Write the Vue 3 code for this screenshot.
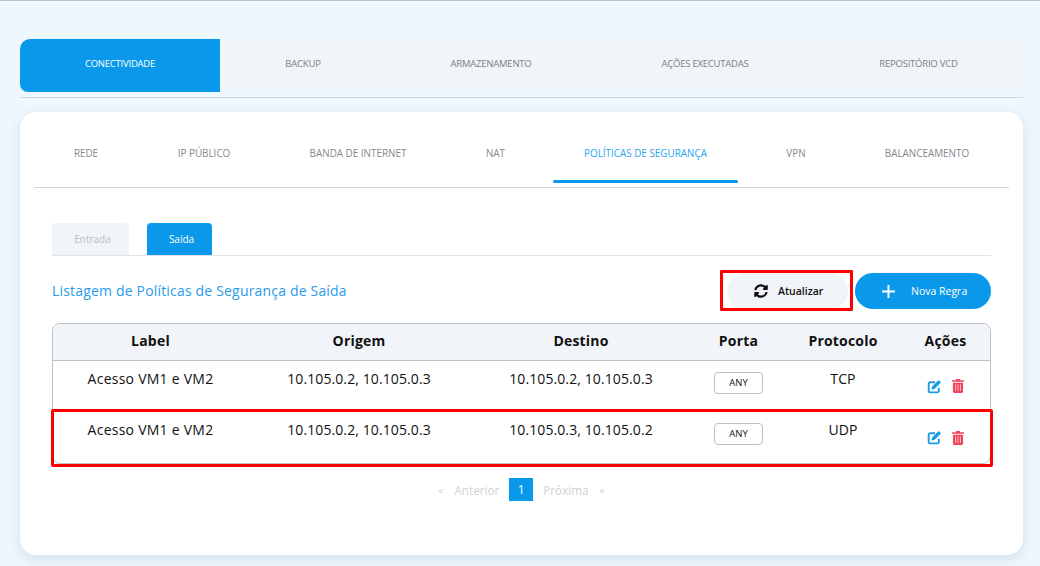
<script setup>
const mainTabs = [
  { label: 'CONECTIVIDADE', w: 200, active: true },
  { label: 'BACKUP', w: 166 },
  { label: 'ARMAZENAMENTO', w: 210 },
  { label: 'AÇÕES EXECUTADAS', w: 218 },
  { label: 'REPOSITÓRIO VCD', w: 209 }
]
const subTabs = [
  { label: 'REDE', w: 104 },
  { label: 'IP PÚBLICO', w: 132 },
  { label: 'BANDA DE INTERNET', w: 176 },
  { label: 'NAT', w: 99 },
  { label: 'POLÍTICAS DE SEGURANÇA', w: 201, active: true },
  { label: 'VPN', w: 100 },
  { label: 'BALANCEAMENTO', w: 162 }
]
const rows = [
  { label: 'Acesso VM1 e VM2', origem: '10.105.0.2, 10.105.0.3', destino: '10.105.0.2, 10.105.0.3', proto: 'TCP' },
  { label: 'Acesso VM1 e VM2', origem: '10.105.0.2, 10.105.0.3', destino: '10.105.0.3, 10.105.0.2', proto: 'UDP' }
]
</script>

<template>
  <div class="page">
    <nav class="main-tabs">
      <a v-for="t in mainTabs" :key="t.label" class="main-tab" :class="{ active: t.active }" :style="{ width: t.w + 'px' }">{{ t.label }}</a>
    </nav>
    <section class="card">
      <nav class="sub-tabs">
        <a v-for="t in subTabs" :key="t.label" class="sub-tab" :class="{ active: t.active }" :style="{ width: t.w + 'px' }">{{ t.label }}</a>
      </nav>
      <div class="content">
        <div class="pills">
          <a class="pill">Entrada</a>
          <a class="pill on">Saída</a>
        </div>
        <div class="head-row">
          <h2 class="title">Listagem de Políticas de Segurança de Saída</h2>
          <button class="btn refresh">
            <svg width="14" height="14" viewBox="0 0 512 512" fill="#111"><path d="M370.72 133.28C339.458 104.008 298.888 87.962 255.848 88c-77.458.068-144.328 53.178-162.791 126.85-1.344 5.363-6.122 9.15-11.651 9.15H24.103c-7.498 0-13.194-6.807-11.807-14.176C33.933 94.924 134.813 8 256 8c66.448 0 126.791 26.136 171.315 68.685L463.03 40.97C478.149 25.851 504 36.559 504 57.941V192c0 13.255-10.745 24-24 24H345.941c-21.382 0-32.09-25.851-16.971-40.971l41.75-41.749zM32 296h134.059c21.382 0 32.09 25.851 16.971 40.971l-41.75 41.75c31.262 29.273 71.835 45.319 114.876 45.28 77.418-.07 144.315-53.144 162.787-126.849 1.344-5.363 6.122-9.15 11.651-9.15h57.304c7.498 0 13.194 6.807 11.807 14.176C478.067 417.076 377.187 504 256 504c-66.448 0-126.791-26.136-171.315-68.685L48.97 471.03C33.851 486.149 8 475.441 8 454.059V320c0-13.255 10.745-24 24-24z"/></svg>
            <span>Atualizar</span>
          </button>
          <button class="btn add">
            <svg width="13" height="13" viewBox="0 0 13 13" fill="none" stroke="#fff" stroke-width="2"><path d="M6.5 0v13M0 6.5h13"/></svg>
            <span>Nova Regra</span>
          </button>
        </div>
        <div class="table-box">
          <table>
            <colgroup>
              <col class="c1"><col class="c2"><col class="c3"><col class="c4"><col class="c5"><col>
            </colgroup>
            <thead>
              <tr><th>Label</th><th>Origem</th><th>Destino</th><th>Porta</th><th>Protocolo</th><th>Ações</th></tr>
            </thead>
            <tbody>
              <tr v-for="(r, i) in rows" :key="i">
                <td>{{ r.label }}</td>
                <td>{{ r.origem }}</td>
                <td>{{ r.destino }}</td>
                <td><span class="any">ANY</span></td>
                <td>{{ r.proto }}</td>
                <td>
                  <span class="actions">
                    <svg width="15" height="15" viewBox="0 0 16 16"><path d="M12.6 9.2v3.600a1.400 1.400 0 0 1-1.400 1.400H3.200a1.400 1.400 0 0 1-1.400-1.400V4.900a1.400 1.400 0 0 1 1.400-1.400h5.400" fill="none" stroke="#1b9be8" stroke-width="2"/><path d="M12.400 1.100l2.500 2.500-7 7-3 .5.5-3z" fill="#1b9be8"/></svg>
                    <svg width="12" height="14" viewBox="0 0 13 15"><path d="M4.500 0h4l.6 1.200H13v1.700H0V1.200h3.900z" fill="#f2435b"/><path d="M1 4h11v9.500a1.500 1.500 0 0 1-1.500 1.500h-8A1.500 1.500 0 0 1 1 13.500z" fill="#f2435b"/><path d="M3.800 5.500v7.500M6.500 5.500v7.500M9.200 5.500v7.500" stroke="#f8b6bf" stroke-width="1.100"/></svg>
                  </span>
                </td>
              </tr>
            </tbody>
          </table>
          <div class="mark-row"></div>
        </div>
        <div class="pager">
          <span class="pg">«</span>
          <span class="pg word">Anterior</span>
          <span class="cur">1</span>
          <span class="pg word">Próxima</span>
          <span class="pg">»</span>
        </div>
      </div>
    </section>
  </div>
</template>

<style>
html, body { margin: 0; background: #eef7fe; }
</style>

<style scoped>
.page {
  box-sizing: border-box;
  height: 566px;
  overflow: hidden;
  padding: 38px 17px 0 20px;
  border-top: 1px solid #b9c0cc;
  background: #eef7fe;
  font-family: "Open Sans", sans-serif;
  color: #111;
}
.main-tabs {
  display: flex;
  height: 53px;
  background: #f0f5f9;
  border-radius: 10px 10px 0 0;
  box-shadow: 0 5px 0 #eef7fe, 0 6px 0 #cfd6e0;
}
.main-tab {
  display: flex;
  align-items: center;
  justify-content: center;
  box-sizing: border-box;
  padding-bottom: 4px;
  font-size: 9.5px;
  color: #7c7f84;
  letter-spacing: -0.22px;
}
.main-tab.active {
  background: #0a99ea;
  color: #fff;
  border-radius: 10px 0 0 8px;
}
.card {
  margin-top: 20px;
  height: 443px;
  background: #fff;
  border-radius: 16px;
  box-shadow: 0 4px 12px rgba(120, 140, 170, 0.22);
  padding: 0 14px;
}
.sub-tabs {
  display: flex;
  height: 75px;
  border-bottom: 1px solid #d3d5da;
}
.sub-tab {
  position: relative;
  display: flex;
  align-items: center;
  justify-content: center;
  box-sizing: border-box;
  padding-top: 7px;
  font-size: 9.9px;
  color: #85878b;
  white-space: nowrap;
}
.sub-tab.active { color: #2aa5ee; }
.sub-tab.active::after {
  content: "";
  position: absolute;
  left: 8px;
  right: 8px;
  bottom: 4px;
  height: 3px;
  border-radius: 2px;
  background: #0a99ea;
}
.content { padding: 35px 18px 0; }
.pills {
  display: flex;
  gap: 18px;
  height: 32px;
  border-bottom: 1px solid #e1e3e6;
}
.pill {
  width: 77px;
  box-sizing: border-box;
  padding-left: 4px;
  display: flex;
  align-items: center;
  justify-content: center;
  background: #f1f4f8;
  border-radius: 4px 4px 0 0;
  font-size: 10px;
  color: #bcc0c6;
}
.pill.on {
  width: 65px;
  background: #0a99ea;
  color: #fff;
}
.head-row {
  display: flex;
  align-items: center;
  height: 36px;
  margin-top: 17px;
}
.title {
  margin: 0 auto 2px 0;
  font-size: 14px;
  font-weight: 400;
  color: #2a9bea;
  letter-spacing: 0.18px;
}
.btn {
  height: 36px;
  display: flex;
  align-items: center;
  border: 0;
  border-radius: 18px;
  font-family: inherit;
  font-size: 10.5px;
  padding: 0;
}
.refresh {
  position: relative;
  width: 121px;
  margin-right: 7px;
  padding-left: 27px;
  gap: 10px;
  background: #f1f4f8;
  color: #111;
  font-weight: 600;
}
.refresh::after {
  content: "";
  position: absolute;
  left: -7px;
  right: -5px;
  top: -3px;
  bottom: -2px;
  border: 3px solid #f00;
  border-radius: 1px;
}
.add {
  width: 136px;
  padding-left: 27px;
  gap: 16px;
  background: #0a99ea;
  color: #fff;
}
.table-box {
  position: relative;
  margin-top: 14px;
  border: 1px solid #bcc1c9;
  border-radius: 8px;
  height: 141px;
  box-sizing: border-box;
}
table {
  width: 100%;
  border-collapse: collapse;
  table-layout: fixed;
}
.c1 { width: 195px; }
.c2, .c3 { width: 222px; }
.c4 { width: 93px; }
.c5 { width: 116px; }
th {
  height: 36px;
  padding: 0 0 2px;
  box-sizing: border-box;
  background: #f1f4f8;
  border-bottom: 1px solid #bcc1c9;
  font-size: 14px;
  font-weight: 700;
  color: #111;
  text-align: center;
  letter-spacing: 0.2px;
}
th:first-child { border-radius: 7px 0 0 0; }
th:last-child { border-radius: 0 7px 0 0; }
tbody tr:first-child td { height: 52px; }
td {
  height: 51px;
  padding: 8px 0 0;
  text-align: center;
  font-size: 14px;
  color: #111;
  vertical-align: top;
  line-height: 19px;
  box-sizing: border-box;
  letter-spacing: 0.1px;
}
td:first-child { letter-spacing: 0.25px; }
.any {
  display: block;
  box-sizing: border-box;
  width: 49px;
  height: 22px;
  margin: 3px auto 0;
  border: 1px solid #bcc1c9;
  border-radius: 4px;
  font-size: 9.5px;
  line-height: 20px;
  letter-spacing: 0;
}
.actions {
  display: inline-flex;
  align-items: center;
  gap: 10px;
  margin: 10px 0 0 -1px;
}
.actions svg { display: block; }
.mark-row {
  position: absolute;
  left: -2px;
  right: -3px;
  top: 85px;
  height: 58px;
  box-sizing: border-box;
  border: 3px solid #f00;
  border-radius: 2px;
  pointer-events: none;
}
.pager {
  display: flex;
  align-items: center;
  justify-content: center;
  height: 23px;
  margin-top: 14px;
  font-size: 12px;
  color: #cfd2d6;
}
.pg { padding: 0 6px; font-size: 10.5px; }
.pg.word { font-size: 11.7px; padding: 0 5px; }
.cur {
  width: 24px;
  height: 23px;
  margin: 0 5px;
  display: flex;
  align-items: center;
  justify-content: center;
  background: #0a99ea;
  color: #fff;
}
</style>
